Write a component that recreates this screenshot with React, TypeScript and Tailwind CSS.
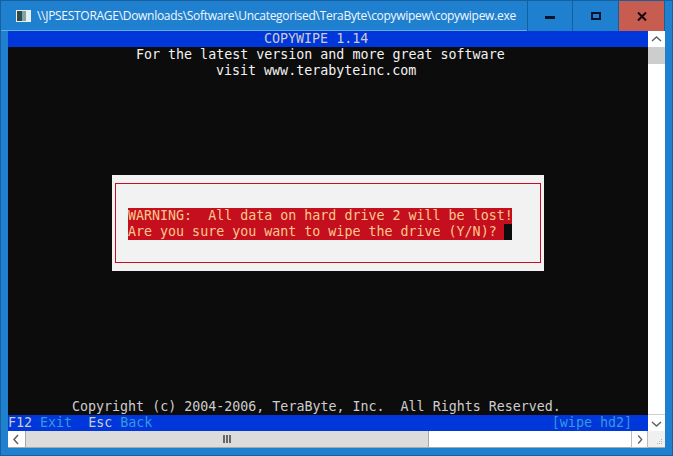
const mono = "font-['DejaVu_Sans_Mono','Liberation_Mono',monospace] text-[13.33px] leading-4 tracking-[-0.01px] whitespace-pre";

const Chevron = ({ dir }: { dir: "up" | "down" | "left" | "right" }) => {
  const points = {
    up: "4,10 8.5,6 13,10",
    down: "4,7 8.5,11 13,7",
    left: "10,4 6,8.5 10,13",
    right: "7,4 11,8.5 7,13",
  };
  return (
    <svg width="17" height="17" viewBox="0 0 17 17" fill="none" stroke="#606060" strokeWidth="1.5">
      <polyline points={points[dir]} />
    </svg>
  );
};

const TitleBar = () => (
  <div className="flex h-[30px] items-stretch">
    <div className="flex flex-1 items-center border-b border-[#62aee6] pl-[15px] min-w-0">
      <svg width="15" height="12" viewBox="0 0 15 12" className="shrink-0">
        <rect width="15" height="12" fill="#e8eef2" />
        <rect x="1" y="1" width="5" height="10" fill="#2f4a4a" />
        <rect x="6" y="1" width="4" height="10" fill="#7fa6a0" />
      </svg>
      <span className="ml-[6px] font-['Open_Sans',sans-serif] text-[12px] tracking-[-0.29px] text-[#f2f8fc] whitespace-nowrap">
        \\JPSESTORAGE\Downloads\Software\Uncategorised\TeraByte\copywipew\copywipew.exe
      </span>
    </div>
    <div className="flex h-[30px] mr-[7px]">
      <div className="flex w-[46px] items-center justify-center border-x border-[#14609f] bg-[#2080d0]">
        <div className="h-[3px] w-[10px] mt-[2px] bg-[#04142c]" />
      </div>
      <div className="flex w-[46px] items-center justify-center border-r border-[#14609f] bg-[#2080d0]">
        <div className="h-[8px] w-[10px] mb-[1px] border-2 border-[#04142c]" />
      </div>
      <div className="flex w-[46px] items-center justify-center border-r border-[#14609f] bg-[#c75c50]">
        <svg width="10" height="9" viewBox="0 0 10 9" stroke="#14060a" strokeWidth="2">
          <path d="M1 0.5 L9 8.5 M9 0.5 L1 8.5" />
        </svg>
      </div>
    </div>
  </div>
);

const VerticalScrollbar = () => (
  <div className="flex w-[17px] flex-col bg-white">
    <div className="flex h-[17px] items-center justify-center border-b border-[#cfcfcf]">
      <Chevron dir="up" />
    </div>
    <div className="h-4 bg-[#cdcdcd]" />
    <div className="flex-1" />
    <div className="flex h-[17px] items-center justify-center border-t border-[#cfcfcf]">
      <Chevron dir="down" />
    </div>
  </div>
);

const HorizontalScrollbar = () => (
  <div className="flex h-[17px] pl-[7px] pr-[7px]">
    <div className="flex w-[17px] items-center justify-center border-b border-[#a8a8a8] bg-white">
      <Chevron dir="left" />
    </div>
    <div className="flex w-[404px] items-center justify-center gap-[1px] border-x border-b border-[#a8a8a8] bg-[#dcdcdc]">
      <div className="h-2 w-[2px] bg-[#666666]" />
      <div className="h-2 w-[2px] bg-[#666666]" />
      <div className="h-2 w-[2px] bg-[#666666]" />
    </div>
    <div className="flex-1 border-b border-[#a8a8a8] bg-white" />
    <div className="flex w-[17px] items-center justify-center border-x border-b border-[#bdbdbd] bg-white">
      <Chevron dir="right" />
    </div>
    <div className="flex w-[17px] items-end justify-end border-b border-[#a8a8a8] bg-[#f0f0f0] p-[3px]">
      <div className="grid grid-cols-3 gap-[1px]">
        {[0, 1, 2, 3, 4, 5, 6, 7, 8].map((i) => (
          <div key={i} className={i === 2 || i >= 4 ? "size-[1px] bg-[#b0b0b0]" : "size-[1px]"} />
        ))}
      </div>
    </div>
  </div>
);

const Console = () => (
  <div className={`flex h-[400px] w-[640px] flex-col bg-[#0c0c0c] text-[#cccccc] ${mono}`}>
    <div className="h-4 bg-[#0037da] pl-[256px]">COPYWIPE 1.14</div>
    <div className="h-4 pl-32 text-[#f2f2f2]">For the latest version and more great software</div>
    <div className="h-4 pl-[208px] text-[#f2f2f2]">visit www.terabyteinc.com</div>
    <div className="mt-24 ml-[104px] h-24 w-[432px] bg-[#f2f2f2] px-[3px] py-[8px]">
      <div className="h-full border border-[#c50f1f] pl-3 pt-6">
        <div className="w-[384px] bg-[#c50f1f] text-[#f9c98c]">WARNING:  All data on hard drive 2 will be lost!</div>
        <div className="flex w-[384px] bg-[#c50f1f] text-[#f9c98c]">
          <span className="flex-1">Are you sure you want to wipe the drive (Y/N)?</span>
          <span className="h-4 w-2 bg-[#0c0c0c]" />
        </div>
      </div>
    </div>
    <div className="mt-auto h-4 pl-16">Copyright (c) 2004-2006, TeraByte, Inc.  All Rights Reserved.</div>
    <div className="flex h-4 justify-between bg-[#0037da] pr-4">
      <span>
        <span>F12 </span>
        <span className="text-[#3a96dd]">Exit</span>
        <span>  Esc </span>
        <span className="text-[#3a96dd]">Back</span>
      </span>
      <span className="text-[#3a96dd]">[wipe hd2]</span>
    </div>
  </div>
);

export default function App() {
  return (
    <div className="h-[456px] w-[673px] overflow-hidden border border-[#175f9e] bg-[#2080d0]">
      <TitleBar />
      <div className="flex pl-[7px]">
        <Console />
        <VerticalScrollbar />
      </div>
      <HorizontalScrollbar />
    </div>
  );
}
